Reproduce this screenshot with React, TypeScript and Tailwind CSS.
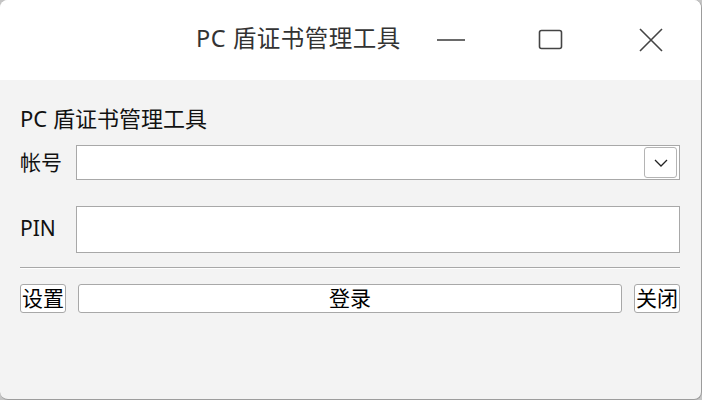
import React from "react";

const font = { fontFamily: '"Noto Sans", "Noto Sans CJK SC", sans-serif' };

export default function App() {
  return (
    <div className="w-[702px] h-[400px] bg-[#c4c4c4]" style={font}>
      <div className="w-full h-full rounded-[8px] overflow-hidden bg-[#f3f3f3] border-r border-b border-[#9c9c9c] flex flex-col">
        {/* Title bar */}
        <div className="h-[80px] bg-white flex items-stretch shrink-0">
          <div className="flex-1 flex items-center pl-[196px] pb-[2px]">
            <span className="text-[23.5px] leading-none text-[#333] tracking-[0.5px]">PC 盾证书管理工具</span>
          </div>
          <div className="w-[100px] flex items-center justify-center">
            <svg width="30" height="4" viewBox="0 0 30 4">
              <line x1="1" y1="2" x2="29" y2="2" stroke="#444" strokeWidth="1.6" />
            </svg>
          </div>
          <div className="w-[100px] flex items-center justify-center">
            <svg width="26" height="22" viewBox="0 0 26 22">
              <rect x="1.5" y="1.5" width="22" height="18" rx="2" fill="none" stroke="#444" strokeWidth="1.6" />
            </svg>
          </div>
          <div className="w-[100px] flex items-center justify-center">
            <svg width="24" height="24" viewBox="0 0 24 24">
              <path d="M1 1 L23 23 M23 1 L1 23" stroke="#444" strokeWidth="1.6" fill="none" />
            </svg>
          </div>
        </div>

        {/* Content */}
        <div className="flex-1 flex flex-col pl-[20px] pr-[21px] pt-[24px]">
          <div className="h-[28px] flex items-center text-[22px] leading-none text-[#111]">PC 盾证书管理工具</div>

          <div className="mt-[13px] flex items-center">
            <div className="w-[56px] text-[21px] leading-none text-[#111]">帐号</div>
            <div className="flex-1 h-[35px] bg-white border border-[#a8a8a8] flex items-center justify-end pr-[2px]">
              <div className="w-[33px] h-[31px] border border-[#b4b4b4] rounded-[3px] flex items-center justify-center">
                <svg width="14" height="8" viewBox="0 0 14 8">
                  <path d="M1 1 L7 7 L13 1" stroke="#222" strokeWidth="1.3" fill="none" />
                </svg>
              </div>
            </div>
          </div>

          <div className="mt-[26px] flex items-center">
            <div className="w-[56px] text-[21px] leading-none text-[#111] -mt-[3px]">PIN</div>
            <div className="flex-1 h-[47px] bg-white border border-[#a8a8a8]" />
          </div>

          <div className="mt-[14px] h-[2px] border-t border-[#a8a8a8] border-b border-b-white" />

          <div className="mt-[15px] flex items-center gap-[12px]">
            <button className="w-[46px] h-[29px] bg-white border border-[#a8a8a8] rounded-[3px] text-[21px] leading-none text-black flex items-center justify-center">设置</button>
            <button className="flex-1 h-[29px] bg-white border border-[#a8a8a8] rounded-[3px] text-[21px] leading-none text-black flex items-center justify-center">登录</button>
            <button className="w-[46px] h-[29px] bg-white border border-[#a8a8a8] rounded-[3px] text-[21px] leading-none text-black flex items-center justify-center">关闭</button>
          </div>
        </div>
      </div>
    </div>
  );
}
